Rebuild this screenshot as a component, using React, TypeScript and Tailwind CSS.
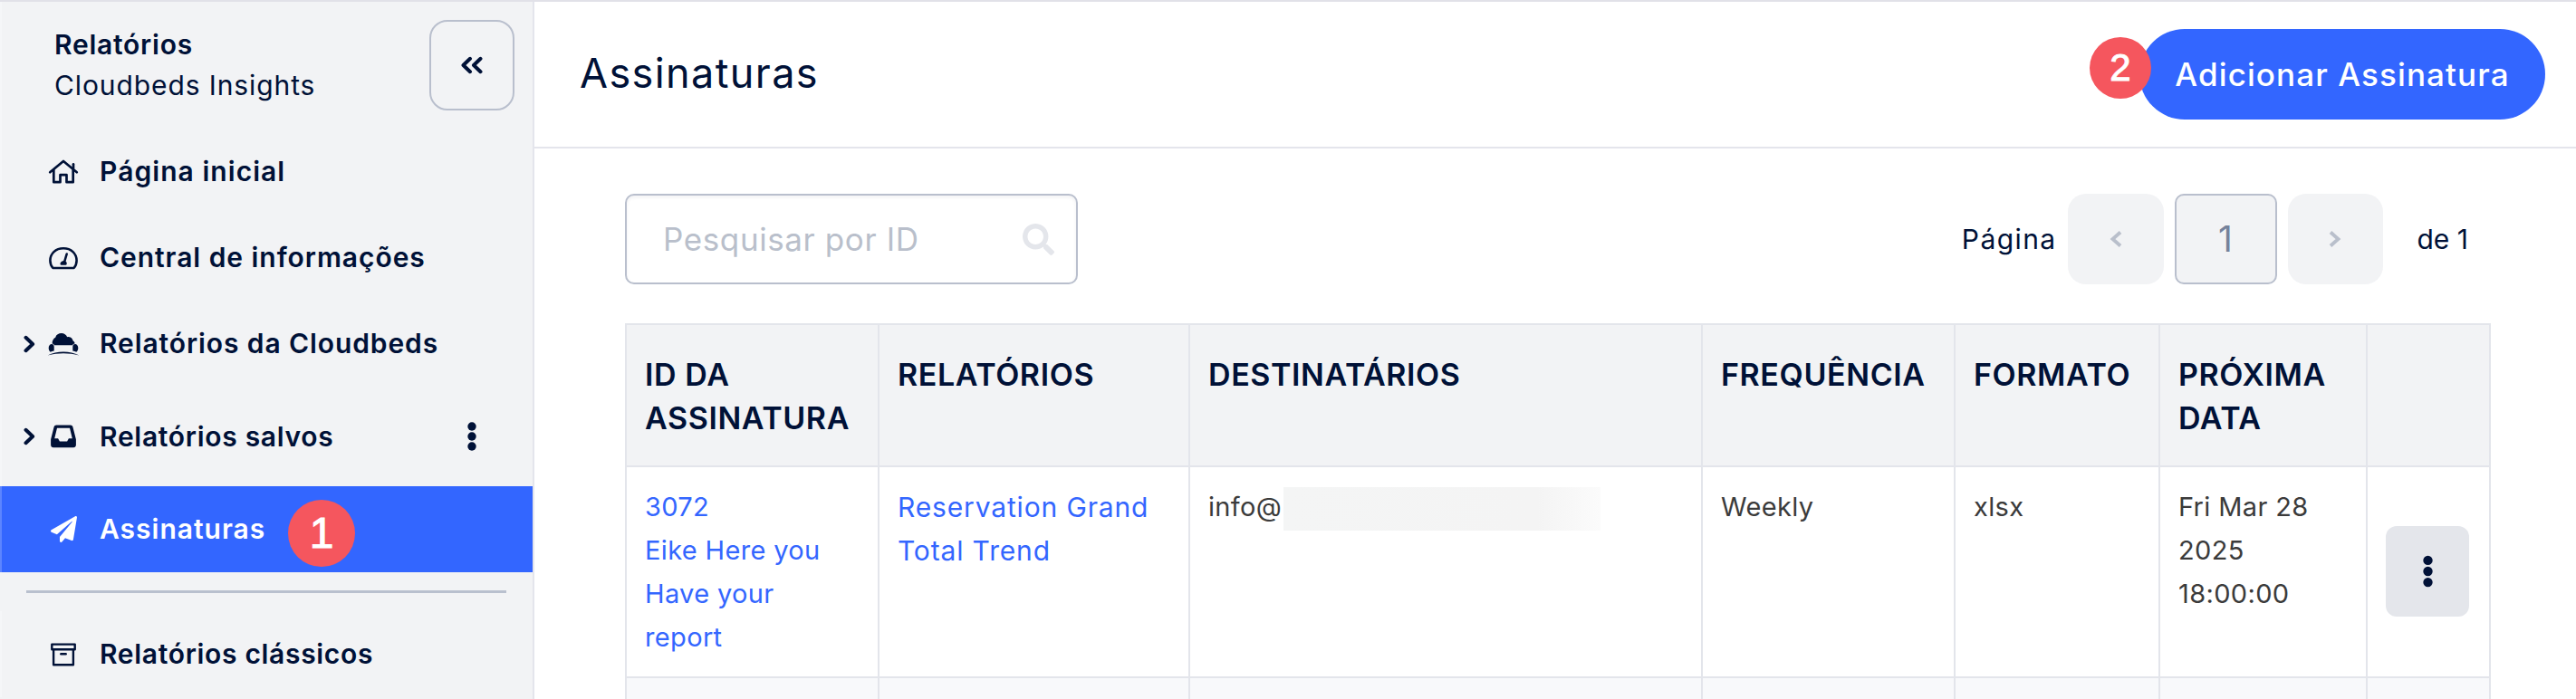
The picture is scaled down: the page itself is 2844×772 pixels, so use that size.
import type { ReactNode } from 'react';
import { FaPaperPlane, FaSearch } from 'react-icons/fa';

function HomeIcon() {
  return (
    <svg className="w-9 h-[30px]" viewBox="0 0 36 30" fill="none" stroke="currentColor" strokeWidth="2.7" strokeLinecap="round" strokeLinejoin="round">
      <path d="M3.2 15.2 18 3l14.8 12.2" />
      <path d="M7.3 13v13.2h7.2v-8h7v8h7.2V13" />
      <path d="M29 11V6.3" />
    </svg>
  );
}

function GaugeIcon() {
  return (
    <svg className="w-9 h-[30px]" viewBox="0 0 36 30" fill="none" stroke="currentColor" strokeWidth="2.6" strokeLinecap="round" strokeLinejoin="round">
      <path d="M6.4 26h23.2c1.5-1.7 3-4.7 3-8.2C32.6 10 26.5 4.3 18 4.3S3.4 10 3.4 17.8c0 3.5 1.5 6.5 3 8.2Z" />
      <path d="M21.7 10.5 19 19.5" />
      <path d="M15.8 21.2c.4-1.5 2-2.2 3.3-1.8 1 .3 1.5 1.1 1.3 2.1h-4.6Z" fill="currentColor" />
    </svg>
  );
}

function CloudBedIcon() {
  return (
    <svg className="w-9 h-[30px]" viewBox="0 0 36 30" fill="currentColor">
      <path d="M5.6 14.5C5.5 11 7.6 8.4 9.2 7.7 10 4.5 12.8 3 15.8 3c3 0 5.4 1.8 6.4 4.2 1-.5 2.3-.4 3.5.3 1.8 1 2.6 2.3 2.8 3.7 1.4.8 2.2 2 2 3.3-1.2.1-2 .8-2.4 1.8H7.9c-.4-1-1.2-1.7-2.3-1.8Z" />
      <path d="M1.7 19.2c0-2.5 1.6-4.2 3.3-4.2 1.7 0 2.7 1.3 2.7 3v4.6c-1.7.4-3 .8-3.9 1.1-1.3-.6-2.1-2.3-2.1-4.5ZM34.3 19.2c0-2.5-1.6-4.2-3.3-4.2-1.7 0-2.7 1.3-2.7 3v4.6c1.7.4 3 .8 3.9 1.1 1.3-.6 2.1-2.3 2.1-4.5Z" />
      <path d="M.6 27.6C6 24.8 11.5 23.6 18 23.6s12 1.2 17.4 4C29.5 26 24 25.2 18 25.2S6.5 26 .6 27.6Z" />
    </svg>
  );
}

function InboxIcon() {
  return (
    <svg className="w-7 h-[26px]" viewBox="0 0 28 26" fill="currentColor" fillRule="evenodd">
      <path d="M6.200.5h15.600c1.300 0 2.300.8 2.600 2l3.500 13.700v6.300c0 1.600-1.200 2.800-2.800 2.800H2.900C1.300 25.300.1 24.100.1 22.500v-6.300L3.600 2.500c.3-1.200 1.300-2 2.600-2ZM7 3.700 4.200 15.200h3.900l1.800 3.300h8.200l1.800-3.300h3.900L21 3.700H7Z" />
    </svg>
  );
}

function ArchiveIcon() {
  return (
    <svg className="w-7 h-[26px]" viewBox="0 0 28 26" fill="none" stroke="currentColor" strokeWidth="2.4" strokeLinejoin="round">
      <path d="M1.3 1.6h25.4v5.6H1.3z" />
      <path d="M3.1 7.2v17.1h21.8V7.2" />
      <path d="M11.3 12.3h5.4" strokeLinecap="round" />
    </svg>
  );
}

function Chevron() {
  return (
    <svg className="w-[13px] h-5" viewBox="0 0 13 20" fill="none" stroke="currentColor" strokeWidth="4" strokeLinecap="round" strokeLinejoin="round">
      <path d="m2.5 2.8 7.6 7.2-7.6 7.2" />
    </svg>
  );
}

function Dots({ className }: { className: string }) {
  return (
    <svg className={className} viewBox="0 0 10 32" fill="currentColor">
      <circle cx="5" cy="5" r="4.7" />
      <circle cx="5" cy="16" r="4.7" />
      <circle cx="5" cy="27" r="4.7" />
    </svg>
  );
}

type Item = {
  label: string;
  icon: ReactNode;
  height: string;
  spacing: string;
  expandable?: boolean;
  menu?: boolean;
  active?: boolean;
};

const items: Item[] = [
  { label: 'Página inicial', icon: <HomeIcon />, height: 'h-[95px]', spacing: 'tracking-[1.05px]' },
  { label: 'Central de informações', icon: <GaugeIcon />, height: 'h-[95px]', spacing: 'tracking-[0.95px]' },
  { label: 'Relatórios da Cloudbeds', icon: <CloudBedIcon />, height: 'h-[95px]', spacing: 'tracking-[0.9px]', expandable: true },
  { label: 'Relatórios salvos', icon: <InboxIcon />, height: 'h-[110px]', spacing: 'tracking-[0.7px]', expandable: true, menu: true },
  { label: 'Assinaturas', icon: <FaPaperPlane className="size-[29px]" />, height: 'h-[95px]', spacing: 'tracking-[1px]', active: true },
];

function NavItem({ item }: { item: Item }) {
  return (
    <div
      className={`relative flex items-center border-l-2 pl-6 ${item.height} ${
        item.active ? 'bg-[#3366ff] border-[#5c85ff] text-white' : 'border-[#f5f6f8] text-[#001137]'
      }`}
    >
      <span className="w-[13px] shrink-0">{item.expandable && <Chevron />}</span>
      <span className="ml-[13px] flex w-9 shrink-0 justify-center">{item.icon}</span>
      <span className={`ml-[22px] whitespace-nowrap text-[30px] leading-[45px] font-semibold ${item.spacing}`}>{item.label}</span>
      {item.menu && <Dots className="ml-auto mr-[62px] h-8 w-2.5" />}
      {item.active && (
        <span className="absolute left-[316px] top-[15px] flex size-[74px] items-center justify-center rounded-full bg-[#f5565e] font-['Liberation_Sans',sans-serif] text-[48px] leading-none [-webkit-text-stroke:1px_white]">
          1
        </span>
      )}
    </div>
  );
}

const columns = [
  { label: 'ID da assinatura', width: 'w-[279px]' },
  { label: 'Relatórios', width: 'w-[343px]' },
  { label: 'Destinatários', width: 'w-[566px]' },
  { label: 'Frequência', width: 'w-[279px]' },
  { label: 'Formato', width: 'w-[226px]' },
  { label: 'Próxima data', width: 'w-[229px]' },
  { label: '', width: 'w-[138px]' },
];

const cell = 'border-l-2 border-b-2 border-[#e3e5eb] last:border-r-2 align-top text-left pl-5';

export default function App() {
  return (
    <div className="flex h-[772px] w-[2844px] overflow-hidden border-t-2 border-[#e1e1e8] bg-white font-['Inter',sans-serif] text-[#001137]">
      {/* Sidebar */}
      <aside className="h-[770px] w-[590px] shrink-0 border-r-2 border-[#e4e5ec] bg-[#f2f3f5]">
        <div className="flex h-[140px] justify-between border-l-2 border-[#f5f6f8] pl-14 pr-5 pt-5">
          <div className="pt-[5px] pl-0.5 text-[30px] leading-[45px]">
            <p className="font-semibold tracking-[0.75px]">Relatórios</p>
            <p className="tracking-[0.9px]">Cloudbeds Insights</p>
          </div>
          <button className="flex h-[100px] w-[94px] items-center justify-center rounded-[20px] border-2 border-[#b9bfcd]">
            <svg className="h-5 w-6" viewBox="0 0 24 20" fill="none" stroke="currentColor" strokeWidth="4" strokeLinecap="round" strokeLinejoin="round">
              <path d="M10 2.8 2.5 10l7.5 7.2M21.5 2.8 14 10l7.5 7.2" />
            </svg>
          </button>
        </div>
        <nav>
          {items.map((item) => (
            <NavItem key={item.label} item={item} />
          ))}
          <div className="mx-[29px] mt-5 mb-5 h-[3px] bg-[#b9c0ce]" />
          <NavItem item={{ label: 'Relatórios clássicos', icon: <ArchiveIcon />, height: 'h-[95px]', spacing: 'tracking-[0.68px]' }} />
        </nav>
      </aside>

      <main className="flex-1">
        <header className="flex h-[162px] items-center justify-between border-b-2 border-[#e4e5ec] pl-[50px] pr-[34px]">
          <h1 className="-mt-0.5 text-[45px] tracking-[1.4px]">Assinaturas</h1>
          <button className="relative h-[100px] w-[448px] rounded-full bg-[#3366ff] text-[35px] font-medium tracking-[1.1px] whitespace-nowrap text-white">
            Adicionar Assinatura
            <span className="absolute -left-[55px] top-[9px] flex size-[68px] items-center justify-center rounded-full bg-[#f5565e] font-['Liberation_Sans',sans-serif] text-[42px] leading-none font-normal tracking-normal [-webkit-text-stroke:1px_white]">
              2
            </span>
          </button>
        </header>

        <div className="flex items-center justify-between pt-[50px] pl-[100px] pr-[119px]">
          <div className="flex h-[100px] w-[500px] items-center justify-between rounded-[10px] border-2 border-[#b9bfcd] pl-10 pr-6 shadow-[inset_0_2px_4px_rgba(0,17,55,0.06)]">
            <span className="text-[35px] tracking-[0.6px] text-[#b9bfcb]">Pesquisar por ID</span>
            <FaSearch className="size-[35px] text-[#e4e6eb]" />
          </div>
          <div className="flex items-center text-[30px]">
            <span className="mr-3 tracking-[1.4px]">Página</span>
            <span className="flex h-[100px] w-[106px] items-center justify-center rounded-[20px] bg-[#f2f3f5]">
              <svg className="h-[18px] w-3.5 text-[#b9bfcb]" viewBox="0 0 14 18" fill="none" stroke="currentColor" strokeWidth="3.8">
                <path d="M12 1.5 3.5 9l8.5 7.5" />
              </svg>
            </span>
            <span className="mx-3 flex h-[100px] w-[113px] items-center justify-center rounded-[10px] border-2 border-[#b9bfcd] bg-[#f2f3f5] text-[39px] text-[#75829b]">1</span>
            <span className="mr-[38px] flex h-[100px] w-[105px] items-center justify-center rounded-[20px] bg-[#f2f3f5]">
              <svg className="h-[18px] w-3.5 text-[#b9bfcb]" viewBox="0 0 14 18" fill="none" stroke="currentColor" strokeWidth="3.8">
                <path d="m2 1.5 8.5 7.5L2 16.5" />
              </svg>
            </span>
            <span>de 1</span>
          </div>
        </div>

        {/* Subscriptions table */}
        <table className="ml-[100px] mt-[43px] w-[2060px] table-fixed border-separate border-spacing-0">
          <thead>
            <tr className="h-[159px] bg-[#f2f3f5] text-[34px] leading-[48px] uppercase">
              {columns.map((col, i) => (
                <th key={i} className={`${cell} ${col.width} border-t-2 pt-[31px] font-semibold tracking-[0.6px]`}>
                  {col.label}
                </th>
              ))}
            </tr>
          </thead>
          <tbody className="text-[29px] leading-[48px] tracking-[0.35px] text-[#3b3b3b]">
            <tr className="h-[233px]">
              <td className={`${cell} pt-5 pr-6 text-[#3366ff]`}>
                3072
                <br />
                Eike Here you Have your report
              </td>
              <td className={`${cell} pt-5 text-[30px] tracking-[0.85px] text-[#3366ff]`}>Reservation Grand Total Trend</td>
              <td className={`${cell} pt-5`}>
                <div className="flex items-center">
                  info@
                  <span className="mt-0.5 -mb-0.5 ml-0.5 h-12 w-[350px] bg-linear-to-r from-[#f4f5f5] via-[#f4f4f4] via-80% to-[#fbfbfb]" />
                </div>
              </td>
              <td className={`${cell} pt-5`}>Weekly</td>
              <td className={`${cell} pt-5`}>xlsx</td>
              <td className={`${cell} pt-5 pr-10`}>Fri Mar 28 2025 18:00:00</td>
              <td className={`${cell} pt-[65px]`}>
                <button className="flex h-[100px] w-[92px] items-center justify-center rounded-xl bg-[#e4e6eb] text-[#001137]">
                  <Dots className="h-9 w-[11px]" />
                </button>
              </td>
            </tr>
            <tr className="h-[60px] bg-[#f8f9fb]">
              {columns.map((_, i) => (
                <td key={i} className={cell} />
              ))}
            </tr>
          </tbody>
        </table>
      </main>
    </div>
  );
}
